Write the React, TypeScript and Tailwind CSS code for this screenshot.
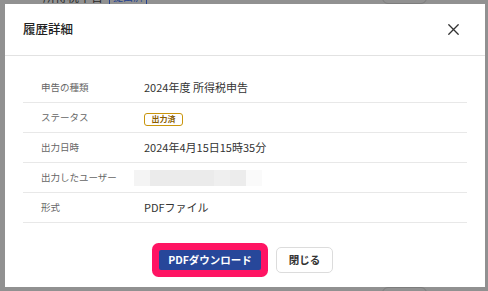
import React from "react"

const font = { fontFamily: '"Noto Sans CJK JP", "Noto Sans", sans-serif' }

interface Row {
  label: string
  value: React.ReactNode
}

function CloseIcon() {
  return (
    <svg width="11" height="11" viewBox="0 0 11 11" fill="none">
      <path d="M0.8 0.8L10.2 10.2M10.2 0.8L0.8 10.2" stroke="#333" strokeWidth="1.3" strokeLinecap="round" />
    </svg>
  )
}

// pixelated (masked) user name
function BlurredName() {
  return (
    <div className="-ml-[10px] flex h-[16px]">
      <div className="w-[16px] bg-[#f4f4f4]" />
      <div className="w-[64px] bg-[#ebebeb]" />
      <div className="w-[16px] bg-[#efefef]" />
      <div className="w-[16px] bg-[#ececec]" />
      <div className="w-[16px] bg-[#fafafa]" />
    </div>
  )
}

export default function App() {
  const rows: Row[] = [
    { label: "申告の種類", value: "2024年度 所得税申告" },
    {
      label: "ステータス",
      value: (
        <span className="inline-flex h-[13px] w-[39px] items-center justify-center rounded-[3px] border border-[#c9950c] text-[8px] font-bold leading-none text-[#8a5d00]">
          出力済
        </span>
      ),
    },
    { label: "出力日時", value: "2024年4月15日15時35分" },
    { label: "出力したユーザー", value: <BlurredName /> },
    { label: "形式", value: "PDFファイル" },
  ]

  return (
    <div className="relative h-[291px] w-[488px] overflow-hidden bg-[#919191] pl-[5px] pt-[4px]" style={font}>
      {/* page behind the overlay */}
      <div className="absolute left-[43px] top-[-10px] flex items-center gap-[6px] text-[12px] leading-[14px] text-[#2a2a2a]">
        <span>所得税申告</span>
        <span className="border-x border-[#24428f] px-[3px] text-[10px] text-[#24428f]">提出済</span>
      </div>
      <div className="absolute left-[382px] top-[-14px] h-[18px] w-[45px] rounded-[6px] border border-[#7d7d7d]" />
      <div className="absolute left-[382px] top-[287px] h-[18px] w-[45px] rounded-[6px] border border-[#7d7d7d]" />

      {/* modal */}
      <div className="relative flex h-[283px] w-[480px] flex-col bg-white">
        <div className="flex h-[52px] shrink-0 items-center justify-between border-b border-[#e2e2e2] pl-[18px] pr-[26px]">
          <h2 className="text-[12.5px] font-medium text-[#222]">履歴詳細</h2>
          <CloseIcon />
        </div>

        <div className="px-[18px] pt-[17px]">
          {rows.map((row) => (
            <div key={row.label} className="flex h-[30px] items-center border-b border-[#e8e8e8]">
              <div className="w-[121px] shrink-0 pl-[18px] text-[9.5px] text-[#666]">{row.label}</div>
              <div className="text-[11px] text-[#333]">{row.value}</div>
            </div>
          ))}
        </div>

        <div className="flex items-center justify-center gap-[15px] pl-[2px] pt-[24px]">
          <button className="flex h-[20px] w-[102px] items-center justify-center rounded-[2px] bg-[#27479a] text-[10.5px] font-bold text-white shadow-[0_0_0_7px_#ff1463]">
            PDFダウンロード
          </button>
          <button className="flex h-[26px] w-[57px] items-center justify-center rounded-[5px] border border-[#dcdcdc] bg-white text-[10.5px] font-bold text-[#333]">
            閉じる
          </button>
        </div>
      </div>
    </div>
  )
}
